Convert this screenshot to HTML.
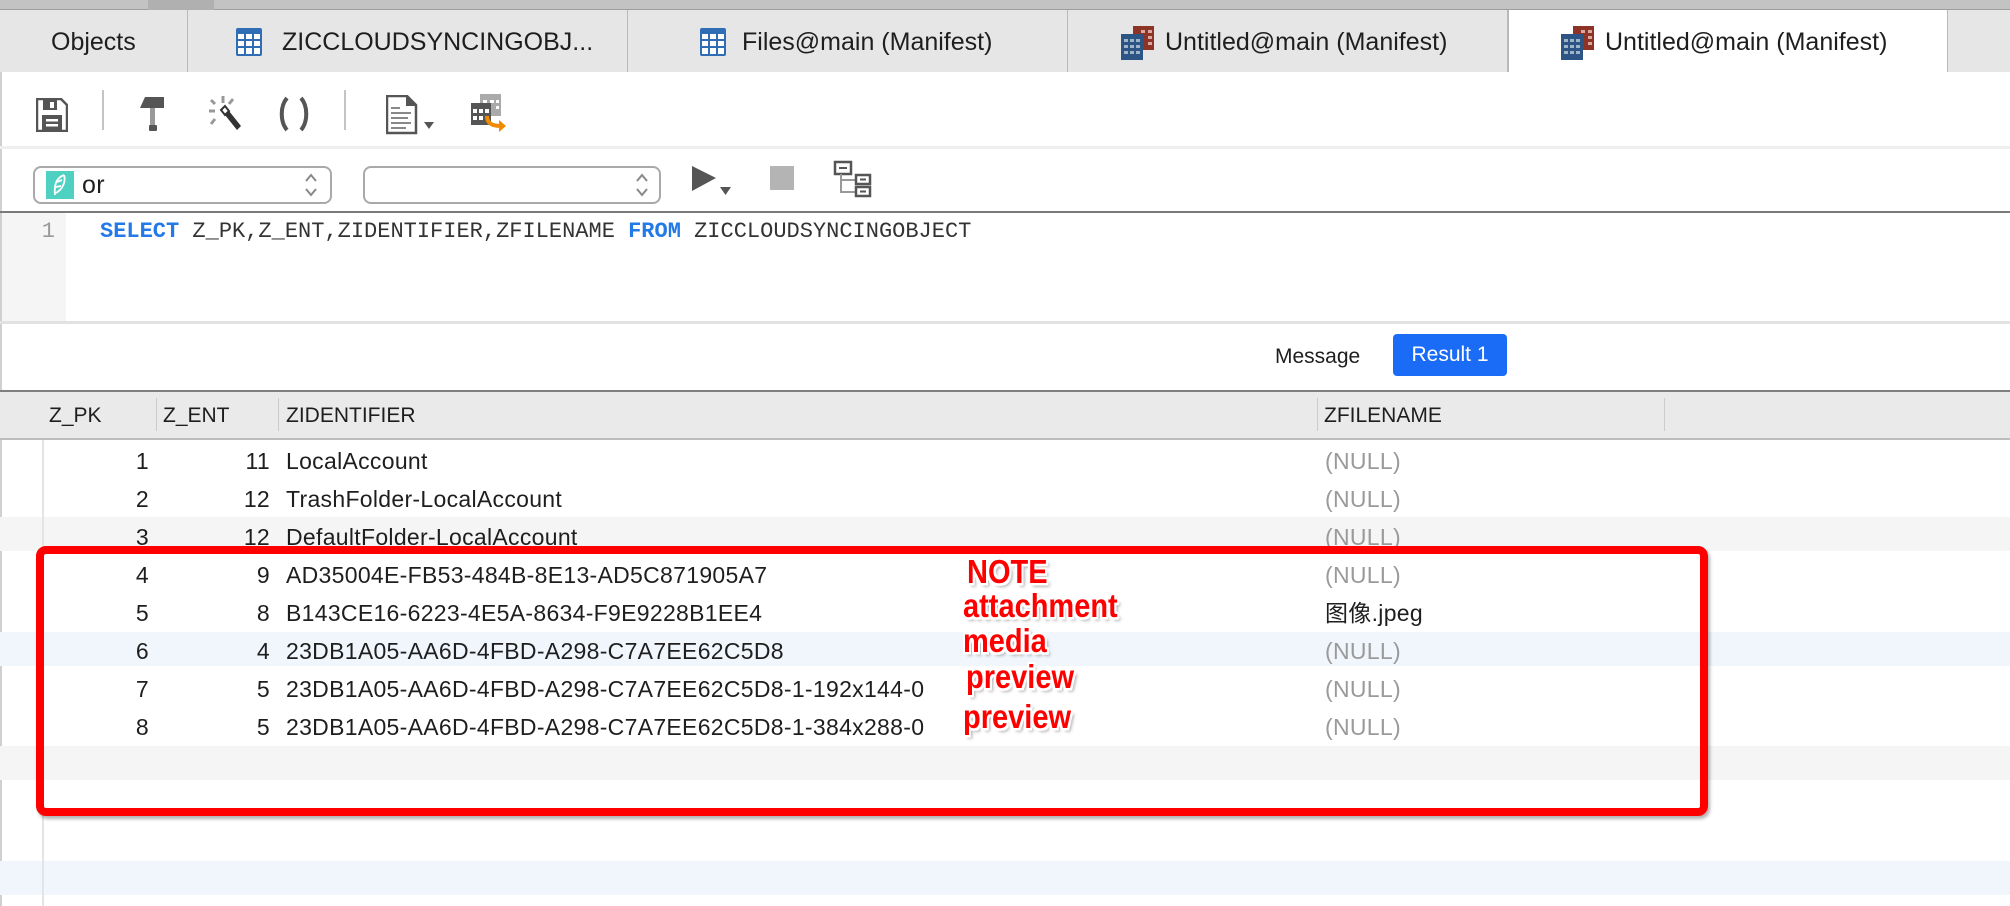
<!DOCTYPE html>
<html><head><meta charset="utf-8">
<style>
*{margin:0;padding:0;box-sizing:border-box}
body{width:2010px;height:906px;overflow:hidden;background:#fff;font-family:"Liberation Sans","Noto Sans CJK SC",sans-serif;color:#1e1e1e;position:relative}
.a{position:absolute}
.tab{position:absolute;top:10px;height:62px;background:#e6e6e6;border-right:1px solid #b9b9b9;font-size:25px;line-height:64px;white-space:nowrap}
.tab span{position:absolute;top:0}
.sep{position:absolute;width:2px;background:#c4c4c4}
.t{position:absolute;font-size:23px;letter-spacing:0.3px;white-space:nowrap;line-height:26px}
.r{text-align:right}
.null{color:#9a9a9a}
.ann{position:absolute;font-weight:bold;color:#f00;font-size:29px;white-space:nowrap;line-height:30px;transform:scaleY(1.15);transform-origin:left bottom;
text-shadow:2px 0 #fff,-2px 0 #fff,0 2px #fff,0 -2px #fff,2px 2px #fff,-2px -2px #fff,2px -2px #fff,-2px 2px #fff,3px 3px 3px rgba(0,0,0,.35)}
</style></head><body>
<div class="a" style="left:0;top:0;width:2010px;height:11px;background:#c3c3c3;border-bottom:2px solid #9d9d9d"></div>
<div class="a" style="left:148px;top:0;width:66px;height:10px;background:#b0b0b0"></div>
<div class="tab" style="left:0;width:188px"><span style="left:51px">Objects</span></div>
<div class="tab" style="left:188px;width:440px">
<svg class="a" style="left:48px;top:18px" width="26" height="28" viewBox="0 0 26 28"><rect width="26" height="28" rx="2" fill="#2f6db5"/><g fill="#fff"><rect x="2" y="6" width="6" height="5"/><rect x="10" y="6" width="6" height="5"/><rect x="18" y="6" width="6" height="5"/><rect x="2" y="13" width="6" height="5"/><rect x="10" y="13" width="6" height="5"/><rect x="18" y="13" width="6" height="5"/><rect x="2" y="20" width="6" height="6"/><rect x="10" y="20" width="6" height="6"/><rect x="18" y="20" width="6" height="6"/></g></svg>
<span style="left:94px">ZICCLOUDSYNCINGOBJ...</span></div>
<div class="tab" style="left:628px;width:440px">
<svg class="a" style="left:72px;top:18px" width="26" height="28" viewBox="0 0 26 28"><rect width="26" height="28" rx="2" fill="#2f6db5"/><g fill="#fff"><rect x="2" y="6" width="6" height="5"/><rect x="10" y="6" width="6" height="5"/><rect x="18" y="6" width="6" height="5"/><rect x="2" y="13" width="6" height="5"/><rect x="10" y="13" width="6" height="5"/><rect x="18" y="13" width="6" height="5"/><rect x="2" y="20" width="6" height="6"/><rect x="10" y="20" width="6" height="6"/><rect x="18" y="20" width="6" height="6"/></g></svg>
<span style="left:114px">Files@main (Manifest)</span></div>
<div class="tab" style="left:1068px;width:440px">
<svg class="a" style="left:53px;top:16px" width="34" height="34" viewBox="0 0 34 34"><rect x="12" y="0" width="21" height="24" fill="#8e3426"/><g fill="#d9a9a0"><rect x="20" y="4" width="4" height="3"/><rect x="27" y="4" width="4" height="3"/><rect x="27" y="10" width="4" height="3"/><rect x="27" y="16" width="4" height="3"/></g><rect x="0" y="8" width="22" height="26" fill="#2c5585"/><g fill="#9fb3c8"><rect x="3" y="13" width="4" height="3"/><rect x="9" y="13" width="4" height="3"/><rect x="15" y="13" width="4" height="3"/><rect x="3" y="19" width="4" height="3"/><rect x="9" y="19" width="4" height="3"/><rect x="15" y="19" width="4" height="3"/><rect x="3" y="25" width="4" height="3"/><rect x="9" y="25" width="4" height="3"/><rect x="15" y="25" width="4" height="3"/></g></svg>
<span style="left:97px">Untitled@main (Manifest)</span></div>
<div class="tab" style="left:1508px;width:440px;background:#fff;border-left:1px solid #b9b9b9">
<svg class="a" style="left:52px;top:16px" width="34" height="34" viewBox="0 0 34 34"><rect x="12" y="0" width="21" height="24" fill="#8e3426"/><g fill="#d9a9a0"><rect x="20" y="4" width="4" height="3"/><rect x="27" y="4" width="4" height="3"/><rect x="27" y="10" width="4" height="3"/><rect x="27" y="16" width="4" height="3"/></g><rect x="0" y="8" width="22" height="26" fill="#2c5585"/><g fill="#9fb3c8"><rect x="3" y="13" width="4" height="3"/><rect x="9" y="13" width="4" height="3"/><rect x="15" y="13" width="4" height="3"/><rect x="3" y="19" width="4" height="3"/><rect x="9" y="19" width="4" height="3"/><rect x="15" y="19" width="4" height="3"/><rect x="3" y="25" width="4" height="3"/><rect x="9" y="25" width="4" height="3"/><rect x="15" y="25" width="4" height="3"/></g></svg>
<span style="left:96px">Untitled@main (Manifest)</span></div>
<div class="tab" style="left:1948px;width:62px;border-right:none"></div>
<div class="a" style="left:0;top:72px;width:2px;height:834px;background:#d0d0d0"></div>
<svg class="a" style="left:36px;top:98px" width="32" height="34" viewBox="0 0 32 34"><path d="M1 1h24l6 6v26H1z" fill="#fff" stroke="#555" stroke-width="2.5"/><rect x="7" y="2" width="14" height="10" fill="#555"/><rect x="14" y="4" width="4" height="6" fill="#fff"/><rect x="6" y="17" width="20" height="15" fill="#555"/><rect x="10" y="21" width="12" height="2.5" fill="#fff"/><rect x="10" y="26" width="12" height="2.5" fill="#fff"/></svg>
<div class="sep" style="left:102px;top:90px;height:40px"></div>
<svg class="a" style="left:140px;top:97px" width="24" height="36" viewBox="0 0 24 36"><path d="M5 0h19v11H0z" fill="#555"/><rect x="10" y="11" width="5" height="18" fill="#999"/><rect x="9" y="28" width="8" height="6" rx="1" fill="#555"/></svg>
<svg class="a" style="left:203px;top:94px" width="42" height="40" viewBox="0 0 42 40"><g stroke="#999" stroke-width="3"><line x1="20" y1="2" x2="20" y2="9"/><line x1="6" y1="17" x2="12" y2="17"/><line x1="8" y1="6" x2="12" y2="10"/><line x1="30" y1="5" x2="26" y2="10"/><line x1="8" y1="30" x2="12" y2="25"/></g><path d="M18 16l4-4 16 20-4 4z" fill="#333"/><path d="M18 16l4-4 4 5-4 4z" fill="#fff" stroke="#333" stroke-width="2"/></svg>
<svg class="a" style="left:278px;top:96px" width="32" height="36" viewBox="0 0 32 36"><path d="M9 2C2 10 2 26 9 34M23 2c7 8 7 24 0 32" fill="none" stroke="#555" stroke-width="4"/></svg>
<div class="sep" style="left:344px;top:90px;height:40px"></div>
<svg class="a" style="left:386px;top:95px" width="52" height="40" viewBox="0 0 52 40"><path d="M1 1h20l9 9v28H1z" fill="#fff" stroke="#555" stroke-width="2.5"/><path d="M20 1v10h10" fill="#555"/><g stroke="#888" stroke-width="2"><line x1="5" y1="13" x2="14" y2="13"/><line x1="5" y1="18" x2="25" y2="18"/><line x1="5" y1="23" x2="22" y2="23"/><line x1="5" y1="28" x2="25" y2="28"/><line x1="5" y1="33" x2="20" y2="33"/></g><path d="M38 27h10l-5 7z" fill="#555"/></svg>
<svg class="a" style="left:470px;top:94px" width="40" height="40" viewBox="0 0 40 40"><rect x="10" y="0" width="21" height="22" fill="#aaa"/><g fill="#fff"><rect x="13" y="6" width="4" height="3"/><rect x="20" y="6" width="4" height="3"/><rect x="26" y="6" width="3" height="3"/><rect x="26" y="12" width="3" height="3"/></g><rect x="1" y="9" width="20" height="22" fill="#555"/><g fill="#fff"><rect x="3" y="15" width="4" height="4"/><rect x="9" y="15" width="4" height="4"/><rect x="15" y="15" width="4" height="4"/><rect x="3" y="22" width="4" height="4"/><rect x="9" y="22" width="4" height="4"/></g><path d="M17 22c0 8 6 10 14 10" fill="none" stroke="#f08a00" stroke-width="4"/><path d="M29 26l7 6-7 6z" fill="#f08a00"/></svg>
<div class="a" style="left:0;top:146px;width:2010px;height:3px;background:#efefef"></div>
<div class="a" style="left:33px;top:166px;width:299px;height:38px;border:2px solid #a9a9a9;border-radius:8px;background:#fff"></div>
<svg class="a" style="left:46px;top:171px" width="28" height="28" viewBox="0 0 28 28"><rect width="28" height="28" fill="#4fd1c1"/><path d="M18 4C10 7 8 14 9 24M18 4c2 6-1 14-8 18M11 11l5-2M10 16l5-1" fill="none" stroke="#fff" stroke-width="1.8"/></svg>
<div class="t" style="left:82px;top:172px;font-size:25px">or</div>
<svg class="a" style="left:304px;top:172px" width="14" height="26" viewBox="0 0 14 26"><path d="M2 9l5-6 5 6M2 17l5 6 5-6" fill="none" stroke="#888" stroke-width="2"/></svg>
<div class="a" style="left:363px;top:166px;width:298px;height:38px;border:2px solid #a9a9a9;border-radius:8px;background:#fff"></div>
<svg class="a" style="left:635px;top:172px" width="14" height="26" viewBox="0 0 14 26"><path d="M2 9l5-6 5 6M2 17l5 6 5-6" fill="none" stroke="#888" stroke-width="2"/></svg>
<svg class="a" style="left:690px;top:164px" width="44" height="34" viewBox="0 0 44 34"><path d="M2 2l24 12-24 13z" fill="#555"/><path d="M30 23h11l-5.5 8z" fill="#555"/></svg>
<div class="a" style="left:770px;top:166px;width:24px;height:24px;background:#b4b4b4"></div>
<svg class="a" style="left:833px;top:160px" width="40" height="38" viewBox="0 0 40 38"><rect x="2" y="2" width="16" height="12" fill="#fff" stroke="#555" stroke-width="2.5"/><line x1="6" y1="8" x2="14" y2="8" stroke="#555" stroke-width="2"/><path d="M8 14v18h14M8 20h14" fill="none" stroke="#999" stroke-width="2"/><rect x="23" y="15" width="14" height="9" fill="#fff" stroke="#555" stroke-width="2.5"/><rect x="23" y="27" width="14" height="9" fill="#fff" stroke="#555" stroke-width="2.5"/><line x1="27" y1="19.5" x2="33" y2="19.5" stroke="#555" stroke-width="2"/><line x1="27" y1="31.5" x2="33" y2="31.5" stroke="#555" stroke-width="2"/></svg>
<div class="a" style="left:0;top:211px;width:2010px;height:2px;background:#7a7a7a"></div>
<div class="a" style="left:2px;top:213px;width:64px;height:109px;background:#f5f5f5"></div>
<div class="a" style="left:0;width:55px;font-family:'Liberation Mono',monospace;font-size:22px;color:#999;text-align:right;line-height:26px;top:219px">1</div>
<div class="a" style="left:100px;top:219px;font-family:'Liberation Mono',monospace;font-size:22px;line-height:26px;color:#333;white-space:nowrap"><b style="color:#2479e8">SELECT</b> Z_PK,Z_ENT,ZIDENTIFIER,ZFILENAME <b style="color:#2479e8">FROM</b> ZICCLOUDSYNCINGOBJECT</div>
<div class="a" style="left:0;top:321px;width:2010px;height:3px;background:#e2e2e2"></div>
<div class="t" style="left:1275px;top:344px;font-size:21px;letter-spacing:0">Message</div>
<div class="a" style="left:1393px;top:334px;width:114px;height:42px;background:#1a6cf7;border-radius:4px;color:#fff;font-size:21px;line-height:42px;text-align:center">Result 1</div>
<div class="a" style="left:0;top:390px;width:2010px;height:50px;background:#eaeaea;border-top:2px solid #7f7f7f;border-bottom:2px solid #bdbdbd"></div>
<div class="sep" style="left:156px;top:398px;height:33px;width:1px;background:#ccc"></div>
<div class="sep" style="left:278px;top:398px;height:33px;width:1px;background:#ccc"></div>
<div class="sep" style="left:1317px;top:398px;height:33px;width:1px;background:#ccc"></div>
<div class="sep" style="left:1664px;top:398px;height:33px;width:1px;background:#ccc"></div>
<div class="t" style="left:49px;top:403px;font-size:21px;letter-spacing:0">Z_PK</div>
<div class="t" style="left:163px;top:403px;font-size:21px;letter-spacing:0">Z_ENT</div>
<div class="t" style="left:286px;top:403px;font-size:21px;letter-spacing:0">ZIDENTIFIER</div>
<div class="t" style="left:1324px;top:403px;font-size:21px;letter-spacing:0">ZFILENAME</div>
<div class="a" style="left:0;top:517px;width:2010px;height:34px;background:#f5f5f5"></div>
<div class="a" style="left:0;top:632px;width:2010px;height:34px;background:#f1f6fd"></div>
<div class="a" style="left:0;top:746px;width:2010px;height:34px;background:#f5f5f5"></div>
<div class="a" style="left:0;top:861px;width:2010px;height:34px;background:#f1f6fd"></div>
<div class="a" style="left:42px;top:440px;width:2px;height:466px;background:#e4e4e4"></div>
<div class="t r" style="left:60px;width:89px;top:448px">1</div><div class="t r" style="left:170px;width:100px;top:448px">11</div><div class="t" style="left:286px;top:448px">LocalAccount</div><div class="t null" style="left:1325px;top:448px">(NULL)</div>
<div class="t r" style="left:60px;width:89px;top:486px">2</div><div class="t r" style="left:170px;width:100px;top:486px">12</div><div class="t" style="left:286px;top:486px">TrashFolder-LocalAccount</div><div class="t null" style="left:1325px;top:486px">(NULL)</div>
<div class="t r" style="left:60px;width:89px;top:524px">3</div><div class="t r" style="left:170px;width:100px;top:524px">12</div><div class="t" style="left:286px;top:524px">DefaultFolder-LocalAccount</div><div class="t null" style="left:1325px;top:524px">(NULL)</div>
<div class="t r" style="left:60px;width:89px;top:562px">4</div><div class="t r" style="left:170px;width:100px;top:562px">9</div><div class="t" style="left:286px;top:562px">AD35004E-FB53-484B-8E13-AD5C871905A7</div><div class="t null" style="left:1325px;top:562px">(NULL)</div>
<div class="t r" style="left:60px;width:89px;top:600px">5</div><div class="t r" style="left:170px;width:100px;top:600px">8</div><div class="t" style="left:286px;top:600px">B143CE16-6223-4E5A-8634-F9E9228B1EE4</div><div class="t" style="left:1325px;top:600px">图像.jpeg</div>
<div class="t r" style="left:60px;width:89px;top:638px">6</div><div class="t r" style="left:170px;width:100px;top:638px">4</div><div class="t" style="left:286px;top:638px">23DB1A05-AA6D-4FBD-A298-C7A7EE62C5D8</div><div class="t null" style="left:1325px;top:638px">(NULL)</div>
<div class="t r" style="left:60px;width:89px;top:676px">7</div><div class="t r" style="left:170px;width:100px;top:676px">5</div><div class="t" style="left:286px;top:676px">23DB1A05-AA6D-4FBD-A298-C7A7EE62C5D8-1-192x144-0</div><div class="t null" style="left:1325px;top:676px">(NULL)</div>
<div class="t r" style="left:60px;width:89px;top:714px">8</div><div class="t r" style="left:170px;width:100px;top:714px">5</div><div class="t" style="left:286px;top:714px">23DB1A05-AA6D-4FBD-A298-C7A7EE62C5D8-1-384x288-0</div><div class="t null" style="left:1325px;top:714px">(NULL)</div>
<div class="a" style="left:36px;top:546px;width:1672px;height:270px;border:8px solid #f00;border-radius:10px;box-shadow:2px 3px 3px rgba(0,0,0,.3)"></div>
<div class="ann" style="left:967px;top:560px">NOTE</div>
<div class="ann" style="left:963px;top:594px">attachment</div>
<div class="ann" style="left:963px;top:629px">media</div>
<div class="ann" style="left:966px;top:665px">preview</div>
<div class="ann" style="left:963px;top:705px">preview</div>
</body></html>
